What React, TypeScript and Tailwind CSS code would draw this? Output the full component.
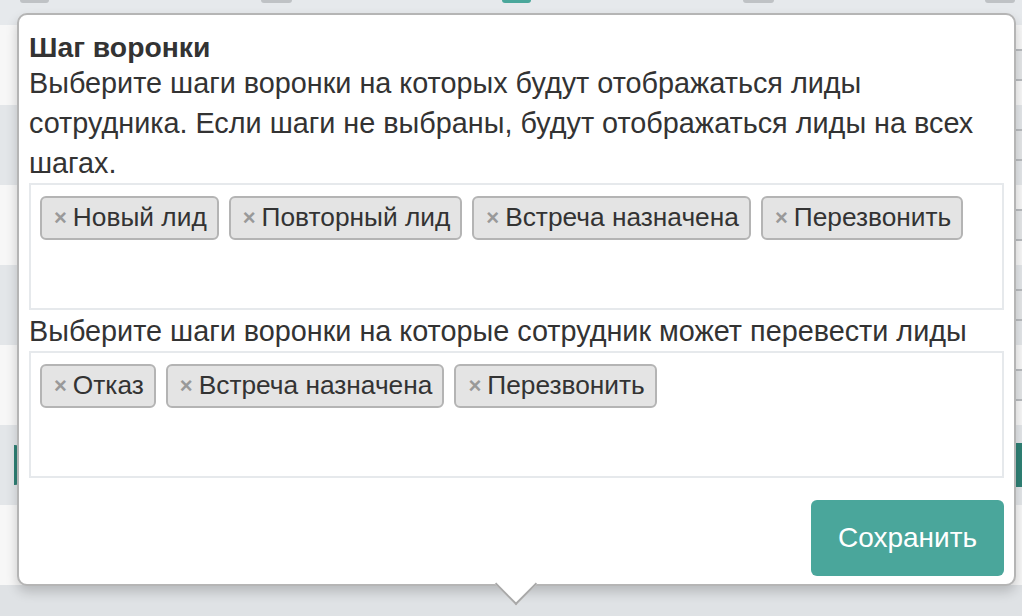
import React from 'react';

const firstSteps = ['Новый лид', 'Повторный лид', 'Встреча назначена', 'Перезвонить'];
const secondSteps = ['Отказ', 'Встреча назначена', 'Перезвонить'];

const Tag: React.FC<{ label: string }> = ({ label }) => (
  <span className="flex items-center h-[44px] pl-[12px] pr-[10px] rounded-[6px] border-2 border-[#b4b4b4] bg-[#e4e4e4] text-[26.3px] text-[#333]">
    <span className="mr-[6px] text-[22px] font-bold text-[#999] leading-none">×</span>
    {label}
  </span>
);

const TagBox: React.FC<{ items: string[] }> = ({ items }) => (
  <div className="h-[127px] border-2 border-[#e6e9ec] px-[9px] pt-[11px]">
    <div className="flex flex-wrap gap-[10px]">
      {items.map((item, i) => (
        <Tag key={i} label={item} />
      ))}
    </div>
  </div>
);

const rows = [
  { bg: 'bg-[#f7f7f7]', btn: 'gray' },
  { bg: 'bg-[#e3e6e9]', btn: 'gray' },
  { bg: 'bg-[#f7f7f7]', btn: 'gray' },
  { bg: 'bg-[#e3e6e9]', btn: 'gray' },
  { bg: 'bg-[#f7f7f7]', btn: 'gray' },
  { bg: 'bg-[#e3e6e9]', btn: 'teal' },
  { bg: 'bg-[#f7f7f7]', btn: 'none' },
];

export default function App() {
  return (
    <div
      className="relative w-[1022px] h-[616px] overflow-hidden bg-[#dfe2e5]"
      style={{ fontFamily: '"Liberation Sans", Arial, sans-serif' }}
    >
      {/* table behind the popover */}
      <div className="flex flex-col">
        <div className="h-[25px] bg-[#e6e9ec] flex">
          <div className="ml-[20px] w-[29px] h-[3px] rounded-b bg-[#bfc2c5]" />
          <div className="ml-[212px] w-[31px] h-[3px] rounded-b bg-[#bfc2c5]" />
          <div className="ml-[210px] w-[29px] h-[3px] rounded-b bg-[#4aa79b]" />
          <div className="ml-[212px] w-[31px] h-[3px] rounded-b bg-[#bfc2c5]" />
          <div className="ml-[211px] w-[30px] h-[3px] rounded-b bg-[#bfc2c5]" />
        </div>
        {rows.map((r, i) => (
          <div key={i} className={`h-[80px] flex items-center justify-between ${r.bg}`}>
            <div className={`ml-[14px] w-[5px] h-[40px] rounded-r ${r.btn === 'teal' ? 'bg-[#2f8175]' : ''}`} />
            {r.btn === 'gray' && (
              <div className="w-[12px] h-[32px] rounded-l-[6px] border-2 border-r-0 border-[#b9bcbf] bg-[#e4e6e8]" />
            )}
            {r.btn === 'teal' && <div className="w-[12px] h-[44px] rounded-l-[6px] bg-[#2f8175]" />}
          </div>
        ))}
      </div>

      {/* popover */}
      <div className="absolute left-[17px] top-[13px] w-[999px] h-[573px] rounded-[10px] border-2 border-[#b5b5b5] bg-white shadow-[0_6px_12px_rgba(0,0,0,0.18)] px-[10px] pt-[16px] text-[#333]">
        <div className="text-[28.3px] font-bold leading-[32px]">Шаг воронки</div>
        <p className="text-[28.8px] leading-[40px]">
          Выберите шаги воронки на которых будут отображаться лиды сотрудника. Если шаги не выбраны, будут
          отображаться лиды на всех шагах.
        </p>
        <TagBox items={firstSteps} />
        <p className="text-[28.8px] leading-[40px] mt-[1px]">
          Выберите шаги воронки на которые сотрудник может перевести лиды
        </p>
        <TagBox items={secondSteps} />
        <div className="flex justify-end mt-[22px]">
          <button className="w-[193px] h-[76px] rounded-[6px] bg-[#4aa69b] text-white text-[28px]">
            Сохранить
          </button>
        </div>

        {/* arrow */}
        <div className="absolute left-[482px] top-[554px] w-[30px] h-[30px] rotate-45 bg-white border-r-2 border-b-2 border-[#a8a8a8]" />
      </div>
    </div>
  );
}
